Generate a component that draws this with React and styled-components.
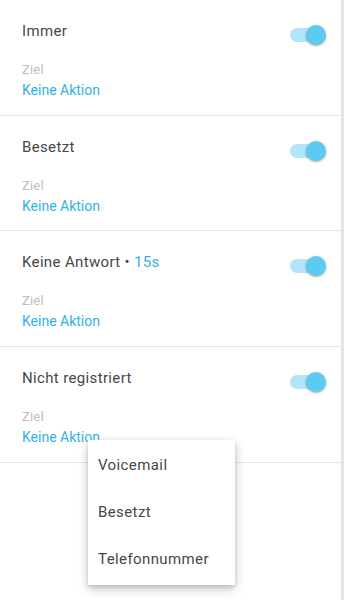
import React from "react";
import styled, { createGlobalStyle } from "styled-components";

const GlobalStyle = createGlobalStyle`
  html, body { margin: 0; padding: 0; background: #ffffff; }
  body { font-family: Roboto, "Noto Sans", Arial, sans-serif; -webkit-font-smoothing: antialiased; }
  #root { height: 100vh; }
`;

const Page = styled.div`
  display: flex;
  height: 100vh;
  width: 100%;
  overflow: hidden;
`;

const Content = styled.div`
  flex: 1;
  display: flex;
  flex-direction: column;
`;

const EdgeStrip = styled.div`
  width: 3px;
  flex: none;
  background: #e6e6e6;
`;

const Section = styled.section`
  position: relative;
  padding: 21px 15px 15.67px 22px;
  border-bottom: 1px solid #e4e4e4;
`;

const TitleRow = styled.div`
  display: flex;
  justify-content: space-between;
  align-items: flex-start;
`;

const Title = styled.div`
  font-size: 15px;
  line-height: 20px;
  letter-spacing: 0.35px;
  color: #474747;
`;

const Accent = styled.span`
  color: #2fb3e6;
`;

const Label = styled.div`
  margin-top: 17px;
  font-size: 13px;
  line-height: 16px;
  letter-spacing: 0.2px;
  color: #bdbdbd;
`;

const Value = styled.div`
  margin-top: 3px;
  font-size: 14px;
  line-height: 18px;
  color: #2fb3e6;
`;

const SwitchRoot = styled.div`
  position: relative;
  width: 36px;
  height: 20px;
  margin-top: 4px;
  flex: none;
`;

const Track = styled.div`
  position: absolute;
  left: 0;
  top: 3px;
  width: 34px;
  height: 14px;
  border-radius: 7px;
  background: ${(p) => (p.$on ? "#b3e5f8" : "#d0d0d0")};
`;

const Thumb = styled.div`
  position: absolute;
  top: 0;
  left: ${(p) => (p.$on ? "16px" : "0")};
  width: 20px;
  height: 20px;
  border-radius: 50%;
  background: ${(p) => (p.$on ? "#5ccbf1" : "#fafafa")};
  box-shadow: 0 1px 3px rgba(0, 0, 0, 0.25), 0 1px 1px rgba(0, 0, 0, 0.12);
`;

const Menu = styled.ul`
  position: absolute;
  left: 88px;
  top: 93px;
  width: 147px;
  margin: 0;
  padding: 2px 0;
  list-style: none;
  background: #ffffff;
  box-shadow: 0 4px 10px rgba(0, 0, 0, 0.22), 0 2px 4px rgba(0, 0, 0, 0.12);
  z-index: 10;
`;

const MenuItem = styled.li`
  height: 47px;
  display: flex;
  align-items: center;
  padding-left: 10px;
  font-size: 15px;
  letter-spacing: 0.4px;
  color: #474747;
`;

function Switch({ on }) {
  return (
    <SwitchRoot>
      <Track $on={on} />
      <Thumb $on={on} />
    </SwitchRoot>
  );
}

const rules = [
  { title: "Immer" },
  { title: "Besetzt" },
  { title: "Keine Antwort", extra: "15s" },
  { title: "Nicht registriert", menu: true },
];

export default function App() {
  return (
    <>
      <GlobalStyle />
      <Page>
        <Content>
          {rules.map((r) => (
            <Section key={r.title}>
              <TitleRow>
                <Title>
                  {r.title}
                  {r.extra && (
                    <>
                      {" • "}
                      <Accent>{r.extra}</Accent>
                    </>
                  )}
                </Title>
                <Switch on />
              </TitleRow>
              <Label>Ziel</Label>
              <Value>Keine Aktion</Value>
              {r.menu && (
                <Menu>
                  <MenuItem>Voicemail</MenuItem>
                  <MenuItem>Besetzt</MenuItem>
                  <MenuItem>Telefonnummer</MenuItem>
                </Menu>
              )}
            </Section>
          ))}
        </Content>
        <EdgeStrip />
      </Page>
    </>
  );
}
